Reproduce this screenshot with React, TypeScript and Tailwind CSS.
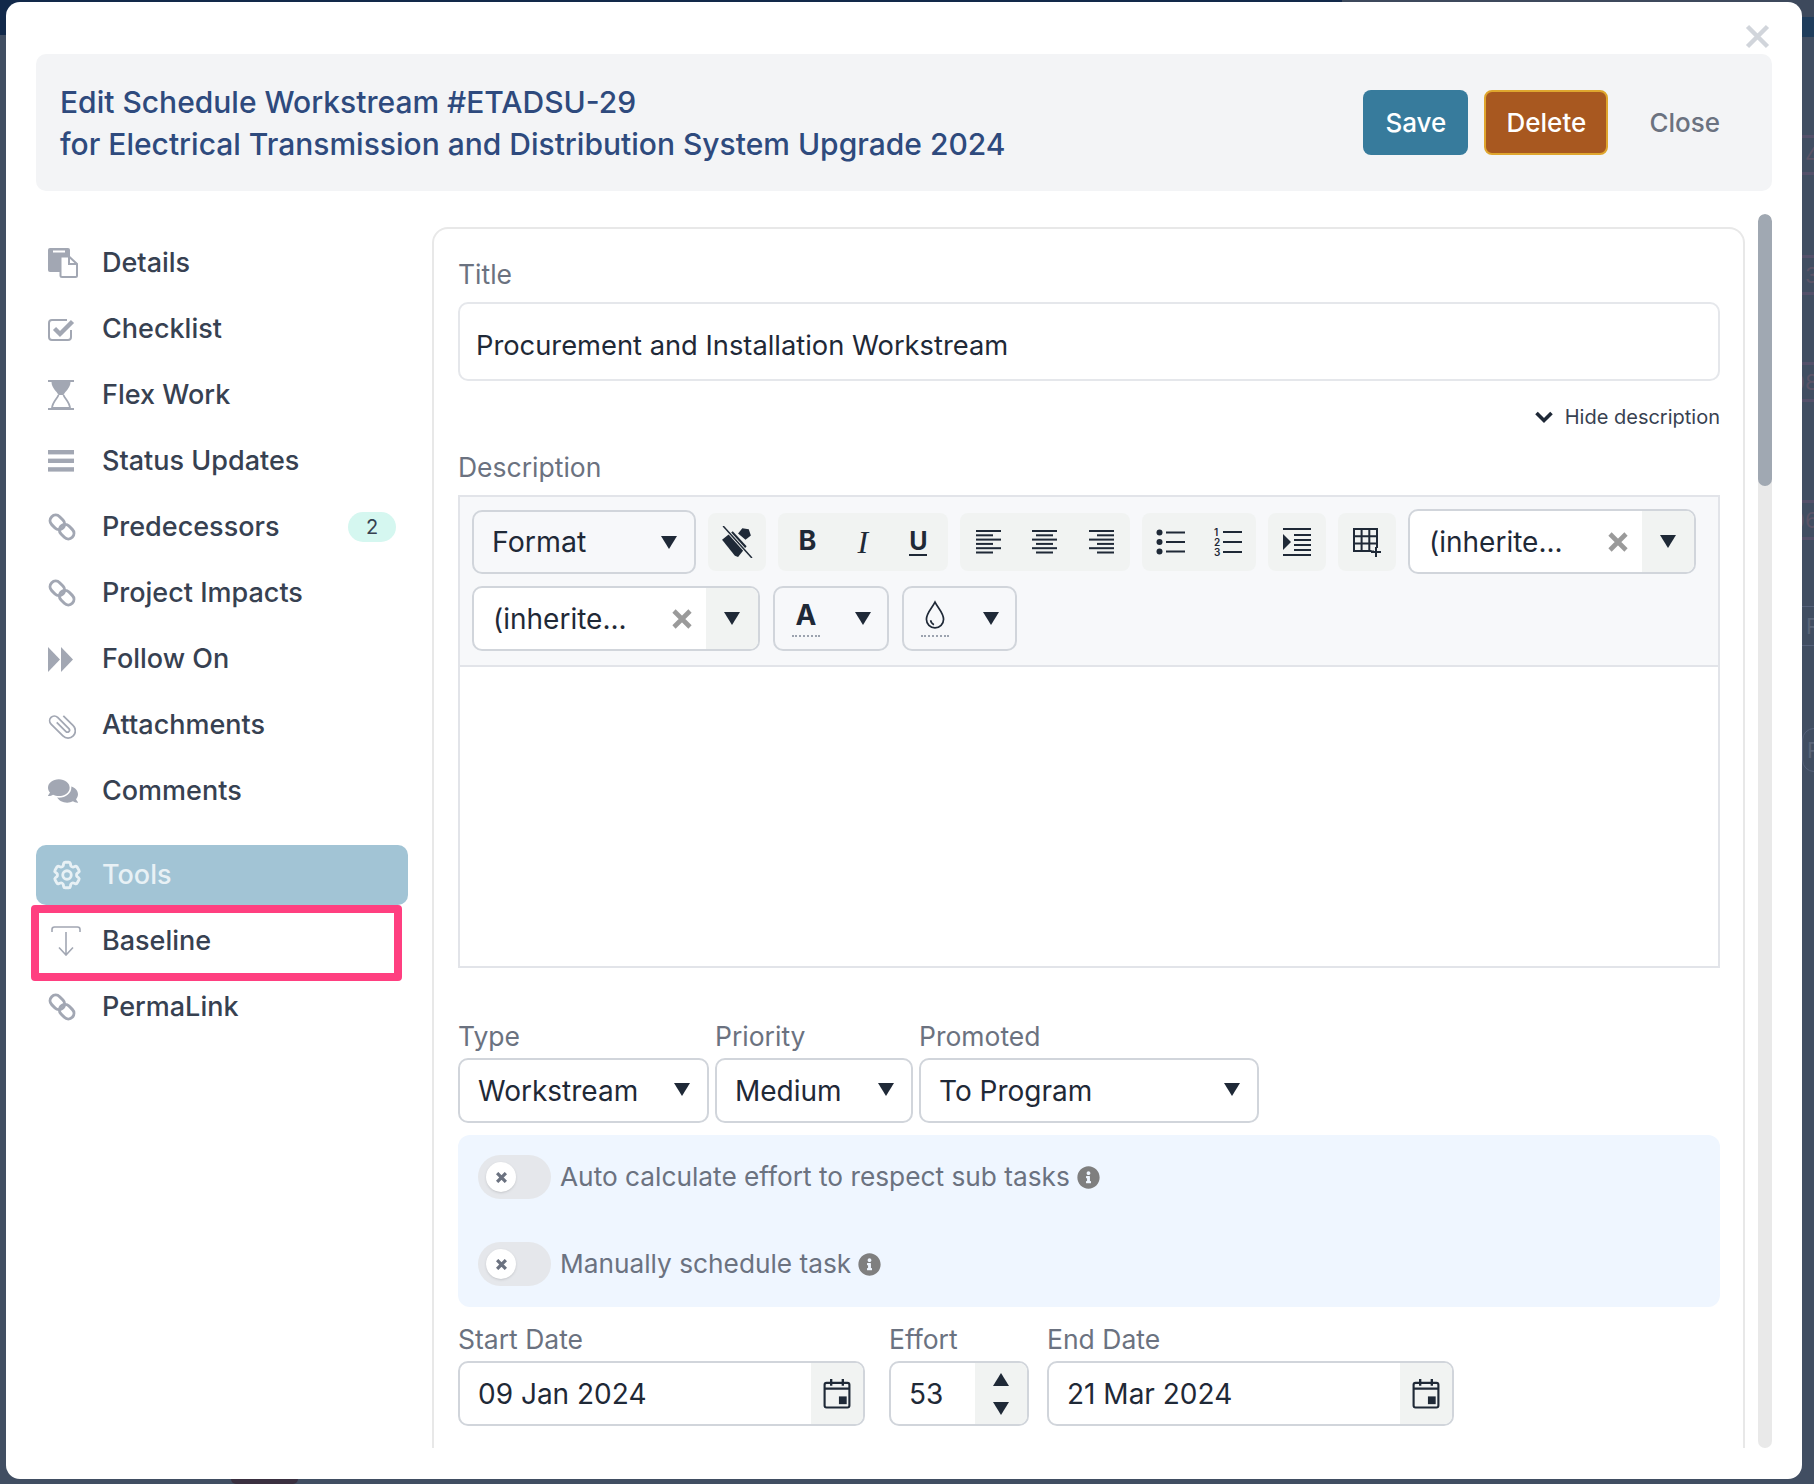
import type { ReactNode } from "react";
import { FaComments, FaInfoCircle } from "react-icons/fa";
import { HiOutlineCog6Tooth } from "react-icons/hi2";

function DetailsIcon() {
  return (
    <svg viewBox="0 0 30 30" className="h-[30px] w-[30px]">
      <path d="M2 0h18a2 2 0 0 1 2 2v22H2a2 2 0 0 1-2-2V2a2 2 0 0 1 2-2z" className="fill-[#a2a7b3]" />
      <rect x="5" y="2.5" width="12" height="2" className="fill-white" />
      <path d="M12.5 8.5h8.5l8 7.5v11.5a1.5 1.5 0 0 1-1.5 1.5H14a1.5 1.5 0 0 1-1.5-1.5z" className="fill-white stroke-[#a2a7b3] stroke-2" />
      <path d="M21 9v7h7.5" className="fill-none stroke-[#a2a7b3] stroke-2" />
    </svg>
  );
}

function CheckIcon() {
  return (
    <svg viewBox="0 0 27 23" className="h-[23px] w-[27px] fill-none">
      <path d="M23 12v7a3 3 0 0 1-3 3H4a3 3 0 0 1-3-3V5a3 3 0 0 1 3-3h15" className="stroke-[#a2a7b3] stroke-2" />
      <path d="M6.5 10.5l5.5 5.5L24.5 3.5" className="stroke-[#a2a7b3] stroke-[4.4]" />
    </svg>
  );
}

function HourglassIcon() {
  return (
    <svg viewBox="0 0 26 30" className="h-[30px] w-[26px]">
      <rect width="26" height="2" className="fill-[#a2a7b3]" />
      <rect y="28" width="26" height="2" className="fill-[#a2a7b3]" />
      <path d="M3.5 2h19c0 6-5.5 9.5-7 13h-5C9 11.5 3.5 8 3.5 2z" className="fill-[#a2a7b3]" />
      <path d="M10.5 15C9 19 4.5 22 4 28h18c-.5-6-5-9-6.5-13" className="fill-none stroke-[#a2a7b3] stroke-[1.8]" />
    </svg>
  );
}

function BarsIcon() {
  return (
    <svg viewBox="0 0 26 22" className="h-[22px] w-[26px] fill-[#a2a7b3]">
      <rect width="26" height="4.4" />
      <rect y="8.6" width="26" height="4.4" />
      <rect y="17.2" width="26" height="4.4" />
    </svg>
  );
}

function LinkIcon() {
  return (
    <svg viewBox="-1 -1 30 30" className="h-[28px] w-[28px] fill-none stroke-[#a2a7b3] stroke-[3.2]">
      <rect x="0.5" y="3" width="17" height="12" rx="6" transform="rotate(45 9 9)" />
      <rect x="10.5" y="13" width="17" height="12" rx="6" transform="rotate(45 19 19)" />
    </svg>
  );
}

function ForwardIcon() {
  return (
    <svg viewBox="0 0 25 25" className="h-[25px] w-[25px] fill-[#a2a7b3]">
      <polygon points="0,0 12,12.5 0,25" />
      <polygon points="13,0 25,12.5 13,25" />
    </svg>
  );
}

function ClipIcon() {
  return (
    <svg viewBox="0 0 30 30" className="h-[28px] w-[28px] fill-none stroke-[#a2a7b3] stroke-[1.9]">
      <path transform="rotate(-45 15 15)" d="M13 9v14a2.2 2.2 0 0 0 4.4 0V6a5 5 0 0 0-10 0v18a7.8 7.8 0 0 0 15.6 0V9" />
    </svg>
  );
}

const navItems: { label: string; icon: ReactNode; badge?: string }[] = [
  { label: "Details", icon: <DetailsIcon /> },
  { label: "Checklist", icon: <CheckIcon /> },
  { label: "Flex Work", icon: <HourglassIcon /> },
  { label: "Status Updates", icon: <BarsIcon /> },
  { label: "Predecessors", icon: <LinkIcon />, badge: "2" },
  { label: "Project Impacts", icon: <LinkIcon /> },
  { label: "Follow On", icon: <ForwardIcon /> },
  { label: "Attachments", icon: <ClipIcon /> },
  { label: "Comments", icon: <FaComments className="h-[28px] w-[30px]" /> },
];

function Caret({ up = false, className = "" }: { up?: boolean; className?: string }) {
  return (
    <svg viewBox="0 0 16 13" className={`h-[13px] w-[16px] fill-[#1f2937] ${className}`}>
      <polygon points={up ? "8,0 16,13 0,13" : "0,0 16,0 8,13"} />
    </svg>
  );
}

function CrossIcon({ className, weight = 3.6 }: { className: string; weight?: number }) {
  return (
    <svg viewBox="0 0 20 20" className={`fill-none stroke-current ${className}`}>
      <path d="M2 2l16 16M18 2L2 18" strokeWidth={weight} />
    </svg>
  );
}

function Lines({ kind }: { kind: "left" | "center" | "right" }) {
  return (
    <svg viewBox="0 0 25 24" className="h-[24px] w-[25px] fill-[#1f2937]">
      {[0, 1, 2, 3, 4, 5].map((i) => {
        const width = i % 2 === 0 ? 25 : 17;
        const x = kind === "left" ? 0 : kind === "right" ? 25 - width : (25 - width) / 2;
        return <rect key={i} x={x} y={i * 4.3} width={width} height="2" />;
      })}
    </svg>
  );
}

function ToolGroup({ width, children }: { width: string; children: ReactNode }) {
  return <div className={`flex h-[58px] items-center justify-around rounded-[8px] bg-[#f1f3f2] ${width}`}>{children}</div>;
}

function ComboField({ value, width }: { value: string; width: string }) {
  return (
    <div className={`flex h-[65px] items-center overflow-hidden rounded-[10px] border-[2px] border-[#d1d5db] bg-white text-[28px] text-[#1f2937] ${width}`}>
      <span className="flex-1 pl-[19px]">{value}</span>
      <CrossIcon className="mr-[14px] h-[20px] w-[20px] text-[#9a9a9a]" weight={4.6} />
      <span className="flex h-full w-[52px] items-center justify-center bg-[#f1f3f2]">
        <Caret />
      </span>
    </div>
  );
}

function SelectField({ value, width }: { value: string; width: string }) {
  return (
    <div className={`flex h-[65px] items-center justify-between rounded-[10px] border-[2px] border-[#d1d5db] bg-white pl-[18px] pr-[17px] text-[28px] text-[#1f2937] ${width}`}>
      <span>{value}</span>
      <Caret className="mb-[3px]" />
    </div>
  );
}

function ColorPicker({ width, children }: { width: string; children: ReactNode }) {
  return (
    <div className={`flex h-[65px] items-center justify-between rounded-[10px] border-[2px] border-[#d1d5db] pl-[16px] pr-[16px] ${width}`}>
      <span className="flex w-[30px] flex-col items-center">
        {children}
        <span className="mt-[4px] h-[3px] w-[28px] border-b-[2px] border-dotted border-[#9ca3af]" />
      </span>
      <Caret />
    </div>
  );
}

function Toggle({ label }: { label: string }) {
  return (
    <div className="flex items-center">
      <span className="flex h-[44px] w-[73px] items-center rounded-full bg-[#e5e7eb] pl-[8px]">
        <span className="flex h-[30px] w-[30px] items-center justify-center rounded-full bg-white shadow-sm">
          <CrossIcon className="h-[11px] w-[11px] text-[#6b7280]" weight={6} />
        </span>
      </span>
      <span className="ml-[9px] text-[26.25px] text-[#6b7280]">{label}</span>
      <FaInfoCircle className="ml-[7px] h-[23px] w-[23px] text-[#7f7f7f]" />
    </div>
  );
}

function Calendar() {
  return (
    <svg viewBox="0 0 28 32" className="h-[31px] w-[28px] fill-none stroke-[#1f2937]">
      <rect x="1.2" y="5" width="25.6" height="25.5" rx="2" strokeWidth="2.2" />
      <path d="M1 11h26" strokeWidth="2.2" />
      <path d="M8 1v7M20 1v7" strokeWidth="2.4" />
      <rect x="16" y="19" width="8" height="8" className="fill-[#1f2937] stroke-none" />
    </svg>
  );
}

function DateField({ value, width }: { value: string; width: string }) {
  return (
    <div className={`flex h-[65px] items-center overflow-hidden rounded-[10px] border-[2px] border-[#d1d5db] bg-white text-[28px] text-[#1f2937] ${width}`}>
      <span className="flex-1 pl-[18px]">{value}</span>
      <span className="flex h-full w-[52px] items-center justify-center bg-[#f1f3f2]">
        <Calendar />
      </span>
    </div>
  );
}

// bits of the page behind the modal that peek out on the right edge
const backdropRows = [
  { text: "4", place: "left-[1802px] top-[135px] pl-[3px]" },
  { text: "3", place: "left-[1802px] top-[255px] pl-[3px]" },
  { text: "08", place: "left-[1788px] top-[362px] pl-[3px]" },
  { text: "06", place: "left-[1788px] top-[500px] pl-[3px]" },
];

export default function App() {
  return (
    <div className="relative h-[1484px] w-[1814px] overflow-hidden bg-[#414e62] pl-[6px] pt-[2px] font-['Inter',sans-serif]">
      <div className="absolute left-0 top-0 h-[35px] w-[1342px] bg-[#12294a]" />
      <div className="absolute right-0 top-0 h-[17px] w-[472px] bg-[#3d495c]" />
      <div className="absolute right-0 top-[17px] h-[20px] w-[12px] bg-[#1f3d5c]" />
      <div className="absolute bottom-0 left-[231px] h-[5px] w-[67px] rounded-b-full bg-[#3a3040]" />
      {backdropRows.map((row) => (
        <div key={row.text} className={`absolute flex h-[40px] w-[44px] items-center border-y-[3px] border-[#54506a] text-[22px] text-[#5b5468] ${row.place}`}>
          {row.text}
        </div>
      ))}
      <div className="absolute left-[1802px] top-[606px] flex h-[40px] w-[30px] items-center border-y-[1px] border-[#55617a] pl-[4px] text-[22px] text-[#5a6579]">R</div>
      <div className="absolute left-[1802px] top-[728px] flex h-[44px] w-[30px] items-center rounded-l-[12px] border-[1px] border-[#55617a] pl-[4px] text-[22px] text-[#5a6579]">R</div>

      <div className="relative h-[1477px] w-[1796px] rounded-[14px] bg-white pl-[30px] pt-[52px]">
        <CrossIcon className="absolute left-[1739px] top-[22px] h-[25px] w-[25px] text-[#d1d5db]" />

        <header className="flex h-[137px] w-[1736px] items-center rounded-[10px] bg-[#f3f4f6] pl-[24px] pr-[52px]">
          <h1 className="flex-1 text-[30px] font-medium leading-[42px] text-[#2e4a7d]">
            Edit Schedule Workstream #ETADSU-29
            <br />
            for Electrical Transmission and Distribution System Upgrade 2024
          </h1>
          <button className="h-[65px] w-[105px] rounded-[8px] bg-[#377b9c] text-[26px] font-medium text-white">Save</button>
          <button className="ml-[16px] h-[65px] w-[124px] rounded-[8px] border-[2px] border-[#dfa62e] bg-[#a85820] text-[26px] font-medium text-white">Delete</button>
          <span className="ml-[41px] text-[26px] font-medium text-[#6b7280]">Close</span>
        </header>

        <div className="mt-[36px] flex">
          <nav className="relative w-[372px] shrink-0 pt-[3px]">
            {navItems.map((item) => (
              <div key={item.label} className="flex h-[66px] items-center pl-[12px] pr-[12px] text-[27px] font-medium text-[#374151]">
                <span className="flex w-[54px] items-center text-[#a2a7b3]">{item.icon}</span>
                <span className="flex-1">{item.label}</span>
                {item.badge && <span className="flex h-[30px] w-[48px] items-center justify-center rounded-full bg-[#d5f7f0] text-[20px] font-normal">{item.badge}</span>}
              </div>
            ))}
            <div className="mt-[21px] flex h-[60px] items-center rounded-[10px] bg-[#a2c4d5] pl-[14px] text-[27px] font-medium text-[#e8f1f5]">
              <HiOutlineCog6Tooth className="mr-[18px] h-[34px] w-[34px]" strokeWidth={2} />
              Tools
            </div>
            <div className="mt-[3px] flex h-[66px] items-center pl-[15px] text-[27px] font-medium text-[#374151]">
              <svg viewBox="0 0 30 30" className="mr-[21px] h-[30px] w-[30px] fill-none stroke-[#a2a7b3] stroke-[1.6]">
                <path d="M1 6V3.5C1 2 2 1 3.5 1h23C28 1 29 2 29 3.5V6" />
                <path d="M15 6v23M8 21.5l7 7.5 7-7.5" />
              </svg>
              Baseline
            </div>
            <div className="flex h-[66px] items-center pl-[12px] text-[27px] font-medium text-[#374151]">
              <span className="flex w-[54px] items-center">
                <LinkIcon />
              </span>
              PermaLink
            </div>
            <div className="pointer-events-none absolute left-[-5px] top-[678px] h-[76px] w-[371px] rounded-[4px] border-[8px] border-[#ff3f80]" />
          </nav>

          <div className="ml-[24px] h-[1221px] w-[1313px] overflow-hidden rounded-t-[16px] border-x-[2px] border-t-[2px] border-[#e8e8e8] pl-[24px] pr-[23px]">
            <label className="mt-[27px] block text-[26.5px] leading-[36px] text-[#6b7280]">Title</label>
            <div className="mt-[10px] flex h-[79px] items-center rounded-[10px] border-[2px] border-[#e5e7eb] pl-[16px] pt-[10px] text-[27.3px] text-[#1f2937]">
              Procurement and Installation Workstream
            </div>
            <div className="mt-[22px] flex items-center justify-end text-[20px] leading-[28px] text-[#374151]">
              <svg viewBox="0 0 20 14" className="mr-[11px] h-[14px] w-[20px] fill-none stroke-[#1f2937] stroke-[3.6]">
                <path d="M2.5 3l7.5 7.5L17.5 3" />
              </svg>
              Hide description
            </div>
            <label className="mt-[18px] block text-[26.5px] leading-[36px] text-[#6b7280]">Description</label>
            <div className="mt-[10px] h-[473px] border-[2px] border-[#e2e4e9]">
              <div className="h-[170px] border-b-[2px] border-[#e2e4e9] bg-[#f7f8fa] pl-[12px] pt-[12px]">
                <div className="flex h-[65px] items-center gap-[12px]">
                  <div className="flex h-[64px] w-[224px] items-center justify-between rounded-[10px] border-[2px] border-[#d1d5db] pl-[18px] pr-[17px] pt-[2px] text-[28.5px] text-[#1f2937]">
                    Format
                    <Caret />
                  </div>
                  <ToolGroup width="w-[58px]">
                    <svg viewBox="0 0 30 30" className="h-[32px] w-[32px] fill-[#1f2937]">
                      <path d="M1 13 11 5l13 14-8 10-3-1z" />
                      <path d="M16 7l4-5 6 1 2 6-5 4z" />
                      <path d="M3 1l25 28" stroke="#f1f3f2" strokeWidth="3" />
                      <path d="M2 0l27 30" stroke="#1f2937" strokeWidth="1.4" />
                    </svg>
                  </ToolGroup>
                  <ToolGroup width="w-[170px]">
                    <span className="text-[27px] font-bold text-[#1f2937]">B</span>
                    <span className="font-['Liberation_Serif',serif] text-[32px] italic text-[#1f2937]">I</span>
                    <span className="border-b-[2px] border-[#1f2937] text-[25px] font-bold leading-[26px] text-[#1f2937]">U</span>
                  </ToolGroup>
                  <ToolGroup width="w-[170px]">
                    <Lines kind="left" />
                    <Lines kind="center" />
                    <Lines kind="right" />
                  </ToolGroup>
                  <ToolGroup width="w-[114px]">
                    <svg viewBox="0 0 30 26" className="h-[26px] w-[30px] fill-[#1f2937]">
                      <circle cx="3.5" cy="3.5" r="3" />
                      <circle cx="3.5" cy="13" r="3" />
                      <circle cx="3.5" cy="22.5" r="3" />
                      <rect x="10" y="2.5" width="19" height="2" />
                      <rect x="10" y="12" width="19" height="2" />
                      <rect x="10" y="21.5" width="19" height="2" />
                    </svg>
                    <svg viewBox="0 0 30 30" className="h-[30px] w-[30px] fill-[#1f2937]">
                      <text x="1" y="9" fontSize="10" fontFamily="Inter" fontWeight="600">1</text>
                      <text x="1" y="19" fontSize="10" fontFamily="Inter" fontWeight="600">2</text>
                      <text x="1" y="29" fontSize="10" fontFamily="Inter" fontWeight="600">3</text>
                      <rect x="10" y="4" width="19" height="2" />
                      <rect x="10" y="14" width="19" height="2" />
                      <rect x="10" y="24" width="19" height="2" />
                    </svg>
                  </ToolGroup>
                  <ToolGroup width="w-[58px]">
                    <svg viewBox="0 0 30 30" className="h-[30px] w-[30px] fill-[#1f2937]">
                      <rect x="1" y="1" width="28" height="2" />
                      <rect x="1" y="27" width="28" height="2" />
                      <rect x="12" y="7" width="17" height="2" />
                      <rect x="12" y="12" width="17" height="2" />
                      <rect x="12" y="17" width="17" height="2" />
                      <rect x="12" y="22" width="17" height="2" />
                      <polygon points="1,7 9,15 1,23" />
                    </svg>
                  </ToolGroup>
                  <ToolGroup width="w-[58px]">
                    <svg viewBox="0 0 30 30" className="h-[30px] w-[30px] fill-none stroke-[#1f2937] stroke-2">
                      <path d="M2 2h23v22H2zM2 9.3h23M2 16.6h23M9.6 2v22M17.3 2v22" />
                      <path d="M24 21v9M19.5 25.5h9" stroke="#f1f3f2" strokeWidth="4" />
                      <path d="M24 20v10M19 25h10" />
                    </svg>
                  </ToolGroup>
                  <ComboField value="(inherite..." width="w-[288px]" />
                </div>
                <div className="mt-[12px] flex items-center gap-[13px]">
                  <ComboField value="(inherite..." width="w-[288px]" />
                  <ColorPicker width="w-[116px]">
                    <span className="text-[28px] font-bold leading-[30px] text-[#1f2937]">A</span>
                  </ColorPicker>
                  <ColorPicker width="w-[115px]">
                    <svg viewBox="0 0 20 28" className="h-[30px] w-[22px] fill-none stroke-[#1f2937] stroke-[1.6]">
                      <path d="M10 2C7 8 2 12 2 18a8 8 0 0 0 16 0c0-6-5-10-8-16z" />
                      <path d="M6 19c0 2 1 3 3 4" />
                    </svg>
                  </ColorPicker>
                </div>
              </div>
            </div>

            <div className="mt-[50px] flex gap-[7px] text-[26.5px] leading-[36px] text-[#6b7280]">
              <div className="w-[250px]">Type</div>
              <div className="w-[197px]">Priority</div>
              <div>Promoted</div>
            </div>
            <div className="mt-[4px] flex gap-[6px]">
              <SelectField value="Workstream" width="w-[251px]" />
              <SelectField value="Medium" width="w-[198px]" />
              <SelectField value="To Program" width="w-[340px]" />
            </div>

            <div className="mt-[12px] flex h-[172px] flex-col justify-between rounded-[12px] bg-[#eff6ff] pb-[21px] pl-[20px] pt-[20px]">
              <Toggle label="Auto calculate effort to respect sub tasks" />
              <Toggle label="Manually schedule task" />
            </div>

            <div className="mt-[14px] flex text-[26.5px] leading-[36px] text-[#6b7280]">
              <div className="w-[431px]">Start Date</div>
              <div className="w-[158px]">Effort</div>
              <div>End Date</div>
            </div>
            <div className="mt-[4px] flex">
              <DateField value="09 Jan 2024" width="w-[407px]" />
              <div className="ml-[24px] flex h-[65px] w-[140px] items-center overflow-hidden rounded-[10px] border-[2px] border-[#d1d5db] bg-white text-[28px] text-[#1f2937]">
                <span className="flex-1 pl-[18px]">53</span>
                <span className="flex h-full w-[52px] flex-col items-center justify-center gap-[16px] bg-[#f1f3f2]">
                  <Caret up />
                  <Caret />
                </span>
              </div>
              <DateField value="21 Mar 2024" width="ml-[18px] w-[407px]" />
            </div>
          </div>

          <div className="ml-[13px] mt-[-13px] h-[1234px] w-[14px] overflow-hidden rounded-full bg-[#e9e9e9]">
            <div className="h-[272px] rounded-full bg-[#a0a8b2]" />
          </div>
        </div>
      </div>
    </div>
  );
}
